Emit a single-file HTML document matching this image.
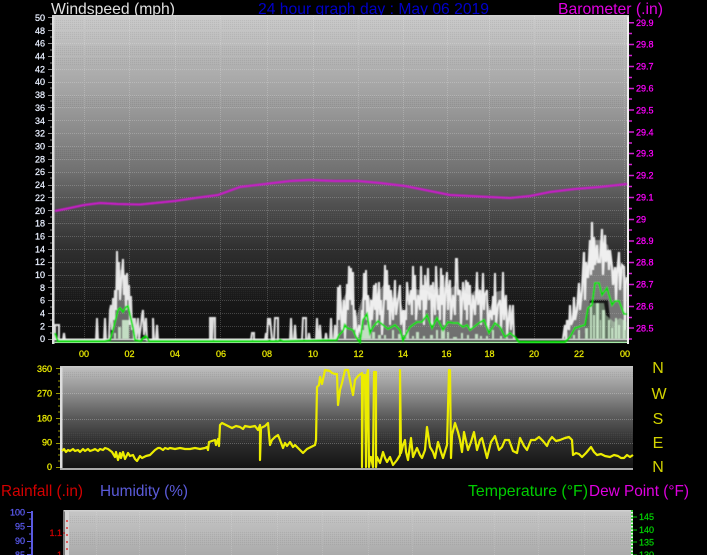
<!DOCTYPE html>
<html><head><meta charset="utf-8"><title>24 hour graph</title>
<style>
html,body{margin:0;padding:0;background:#000;width:707px;height:555px;overflow:hidden}
svg{display:block}
text{font-family:"Liberation Sans",sans-serif}
.t{font-size:16px;fill-opacity:.88}
.s{font-size:9px;stroke-width:.25}
</style></head><body>
<svg width="707" height="555" viewBox="0 0 707 555" xmlns="http://www.w3.org/2000/svg">
<defs>
<linearGradient id="g1" x1="0" y1="0" x2="0" y2="1">
<stop offset="0" stop-color="#cacaca"/><stop offset=".25" stop-color="#a0a0a0"/><stop offset=".47" stop-color="#727272"/><stop offset=".57" stop-color="#525252"/><stop offset=".72" stop-color="#2e2e2e"/><stop offset=".87" stop-color="#191919"/><stop offset="1" stop-color="#0e0e0e"/>
</linearGradient>
<linearGradient id="g2" x1="0" y1="0" x2="0" y2="1">
<stop offset="0" stop-color="#c0c0c0"/><stop offset=".25" stop-color="#909090"/><stop offset=".5" stop-color="#585858"/><stop offset=".75" stop-color="#2c2c2c"/><stop offset="1" stop-color="#111"/>
</linearGradient>
<linearGradient id="g3" x1="0" y1="0" x2="0" y2="1">
<stop offset="0" stop-color="#c6c6c6"/><stop offset="1" stop-color="#ababab"/>
</linearGradient>
<pattern id="d" width="2" height="2" patternUnits="userSpaceOnUse"><rect width="1" height="1" fill="#000" opacity=".06"/><rect x="1" y="1" width="1" height="1" fill="#fff" opacity=".04"/></pattern>
<filter id="b" x="0" y="0" width="707" height="555" filterUnits="userSpaceOnUse"><feGaussianBlur stdDeviation=".45"/></filter>
<filter id="b2" x="0" y="0" width="707" height="555" filterUnits="userSpaceOnUse"><feGaussianBlur stdDeviation=".3"/></filter>
</defs>

<!-- titles -->
<text class="t" x="51" y="14" fill="#fff" textLength="124" lengthAdjust="spacingAndGlyphs">Windspeed (mph)</text>
<text class="t" x="258" y="14" fill="#0000e6" textLength="231" lengthAdjust="spacingAndGlyphs">24 hour graph day : May 06 2019</text>
<text class="t" x="558" y="14" fill="#f0f" textLength="105" lengthAdjust="spacingAndGlyphs">Barometer (.in)</text>

<!-- main plot -->
<rect x="52" y="15" width="577" height="329" fill="url(#g1)"/>
<rect x="54" y="20" width="573" height="20" fill="url(#d)"/>
<rect x="54" y="45" width="573" height="20" fill="url(#d)"/>
<rect x="54" y="96" width="573" height="12" fill="url(#d)"/>
<rect x="54" y="148" width="573" height="12" fill="url(#d)"/>
<rect x="54" y="212" width="573" height="12" fill="url(#d)"/>
<rect x="54" y="275" width="573" height="25" fill="url(#d)"/>
<rect x="52" y="15" width="2.5" height="329" fill="#ddd"/>
<rect x="627" y="15" width="2" height="329" fill="#eee"/>
<rect x="52" y="15" width="577" height="1.5" fill="#d0d0d0"/>

<!-- grid -->
<g filter="url(#b2)">
<path stroke="#fff" stroke-opacity=".2" stroke-width="1" stroke-dasharray="1 1" fill="none" d="M54 326.5H627M54 313.5H627M54 300.5H627M54 287.5H627M54 275.5H627M54 262.5H627M54 249.5H627M54 236.5H627M54 223.5H627M54 210.5H627M54 197.5H627M54 185.5H627M54 172.5H627M54 159.5H627M54 146.5H627M54 133.5H627M54 120.5H627M54 107.5H627M54 95.5H627M54 82.5H627M54 69.5H627M54 56.5H627M54 43.5H627M54 30.5H627M84.5 16V340M129.5 16V340M175.5 16V340M220.5 16V340M267.5 16V340M313.5 16V340M358.5 16V340M403.5 16V340M447.5 16V340M489.5 16V340M534.5 16V340M579.5 16V340M624.5 16V340"/>
</g>

<!-- left ticks -->
<path stroke="#8a8a8a" stroke-width="1" fill="none" d="M48 339.5H52M48 326.5H52M48 313.5H52M48 300.5H52M48 287.5H52M48 275.5H52M48 262.5H52M48 249.5H52M48 236.5H52M48 223.5H52M48 210.5H52M48 197.5H52M48 185.5H52M48 172.5H52M48 159.5H52M48 146.5H52M48 133.5H52M48 120.5H52M48 107.5H52M48 95.5H52M48 82.5H52M48 69.5H52M48 56.5H52M48 43.5H52M48 30.5H52M48 17.5H52M50 333H52M50 320H52M50 307H52M50 294H52M50 281H52M50 268H52M50 256H52M50 243H52M50 230H52M50 217H52M50 204H52M50 191H52M50 178H52M50 166H52M50 153H52M50 140H52M50 127H52M50 114H52M50 101H52M50 88H52M50 76H52M50 63H52M50 50H52M50 37H52M50 24H52"/>
<g class="s" fill="#f4f8ff" stroke="#dfe8ff" text-anchor="end">
<text x="45" y="342">0</text><text x="45" y="329.5">2</text><text x="45" y="316.5">4</text><text x="45" y="303.5">6</text><text x="45" y="291">8</text>
<text x="45" y="278">10</text><text x="45" y="265">12</text><text x="45" y="252.5">14</text><text x="45" y="239.5">16</text><text x="45" y="226.5">18</text>
<text x="45" y="214">20</text><text x="45" y="201">22</text><text x="45" y="188">24</text><text x="45" y="175">26</text><text x="45" y="162.5">28</text>
<text x="45" y="149.5">30</text><text x="45" y="136.5">32</text><text x="45" y="124">34</text><text x="45" y="111">36</text><text x="45" y="98">38</text>
<text x="45" y="85">40</text><text x="45" y="72.5">42</text><text x="45" y="59.5">44</text><text x="45" y="46.5">46</text><text x="45" y="34">48</text><text x="45" y="21">50</text>
</g>

<!-- right ticks -->
<path stroke="#d020d0" stroke-width="1.5" fill="none" d="M629 22.7H634M629 44.5H634M629 66.5H634M629 88.5H634M629 110H634M629 132H634M629 153.5H634M629 175.5H634M629 197.5H634M629 219.5H634M629 241H634M629 262.5H634M629 284.5H634M629 306.5H634M629 328H634M629 33.5H632M629 55.5H632M629 77.5H632M629 99H632M629 121H632M629 143H632M629 164.5H632M629 186.5H632M629 208.5H632M629 230H632M629 252H632M629 273.5H632M629 295.5H632M629 317.5H632M629 339H632"/>
<g class="s" fill="#f0f" stroke="#f0f">
<text x="636" y="26">29.9</text><text x="636" y="47.5">29.8</text><text x="636" y="69.5">29.7</text><text x="636" y="91.5">29.6</text><text x="636" y="113.5">29.5</text><text x="636" y="135.5">29.4</text><text x="636" y="156.5">29.3</text><text x="636" y="178.5">29.2</text><text x="636" y="200.5">29.1</text><text x="636" y="222.5">29</text><text x="636" y="244">28.9</text><text x="636" y="265.5">28.8</text><text x="636" y="287.5">28.7</text><text x="636" y="309.5">28.6</text><text x="636" y="331.5">28.5</text>
</g>

<!-- x labels -->
<g class="s" fill="#e8e800" stroke="#e8e800" text-anchor="middle">
<text x="84" y="357">00</text><text x="129.5" y="357">02</text><text x="175" y="357">04</text><text x="221" y="357">06</text><text x="267" y="357">08</text><text x="313" y="357">10</text><text x="358.5" y="357">12</text><text x="403" y="357">14</text><text x="446.5" y="357">16</text><text x="489.5" y="357">18</text><text x="534" y="357">20</text><text x="579" y="357">22</text><text x="625" y="357">00</text>
</g>

<!-- baseline -->
<rect x="54" y="338.5" width="573" height="2" fill="#c0c0c0"/>
<rect x="54" y="341.5" width="573" height="1.5" fill="#a8e8a8"/>

<g filter="url(#b)">
<!-- barometer -->
<polyline fill="none" stroke="#c81ec8" stroke-width="2.2" points="55,211 70,208 84,205 100,203 118,204 140,204.5 155,203 175,201 195,198 218,195 240,187 265,184 290,181 310,180 335,181 358,181 380,183 405,186 425,190 450,195 470,196 490,197 510,198 530,196 550,192 575,189 600,187 627,184"/>

<!-- mass under gusts -->
<polygon fill="#bdbdbd" fill-opacity=".55" points="338,339 340,305 350,285 356,318 364,292 372,300 378,292 386,282 393,298 400,298 405,318 412,288 420,290 426,290 434,295 441,285 448,290 456,285 462,292 470,295 478,288 484,292 490,308 496,292 503,290 510,318 514,339"/>
<polygon fill="#bdbdbd" fill-opacity=".5" points="112,339 115,300 118,270 124,270 128,290 133,325 135,339"/>
<polygon fill="#c4c4c4" fill-opacity=".55" points="566,339 572,315 580,298 586,270 592,240 600,240 608,245 613,270 620,265 627,280 627,339 612,339 608,300 590,300 584,339"/>

<!-- white gusts -->
<g fill="none" stroke-linejoin="miter">
<polyline stroke="#f6f6f6" stroke-opacity=".9" stroke-width="2" points="55,340 55,325 59,325 59,340 63,340 64,333 65,340 96,340 97,318 98,340 104,340 105,318 106,340 109,340 110,310 111,305 112,330 113,298 114,320 115,290 116,310 117,251 118,290 119,262 120,300 121,285 122,270 123,259 124,295 125,275 126,310 127,273 128,300 129,285 130,325 131,296 132,330 133,318 134,340 135,318 136,340 138,318 139,340 141,325 142,315 143,310 144,335 146,318 147,340 153,340 153,318 154,340 156,340 157,325 158,340 210,340 210,318 212,318 212,340 213,318 215,318 215,340 251,340 252,333 254,333 254,340 265,340 266,333 267,340 268,318 270,325 270,318 272,340 274,340 275,318 278,318 278,340 290,340 291,318 292,340 294,340 295,325 296,340 302,340 303,318 306,318 306,340 308,340 309,333 310,340 316,340 317,318 318,340 319,340 320,325 321,340 325,340 326,333 327,340 330,340 331,318 332,340 334,340 335,325 336,340"/>
<polyline stroke="#f8f8f8" stroke-opacity=".92" stroke-width="2" points="337,339 338,287 339,320 340,285 342,330 344,300 345,339 347,284 348,310 349,266 350,300 351,268 352,305 353,272 354,330 355,310 357,339 359,325 361,335 362,310 363,320 364,273 365,300 366,270 367,320 368,295 370,330 371,300 372,320 374,285 375,310 376,283 377,325 379,282 380,315 381,300 382,335 384,300 385,265 386,300 387,270 388,310 389,285 390,325 391,290 393,320 395,280 396,315 398,300 400,285 401,325 403,310 404,335 405,310 406,320 407,282 409,305 411,290 412,315 413,266 414,300 415,275 416,320 418,295 420,310 421,266 422,300 423,285 424,325 425,275 426,310 428,268 429,300 431,285 432,325 433,282 435,315 436,266 438,310 439,295 440,320 441,268 442,305 443,275 444,325 446,282 447,272 448,310 449,290 450,280 451,320 453,295 455,315 456,259 457,259 458,295 460,290 461,325 463,282 465,310 466,280 467,320 468,282 469,305 470,285 471,330 473,295 475,315 477,272 478,305 480,290 481,325 482,300 483,273 484,310 485,295 487,290 488,330 490,310 492,320 493,296 494,315 495,273 496,325 498,305 500,300 501,330 502,310 503,272 504,320 506,295 507,335 509,315 510,305 511,330 513,305 514,339"/>
<polyline stroke="#f8f8f8" stroke-opacity=".92" stroke-width="2.2" points="563,339 565,325 566,339 567,320 569,330 570,305 571,325 573,320 574,297 575,320 577,310 579,283 580,310 582,290 584,252 585,300 586,262 587,273 588,278 590,240 591,275 592,222 593,270 594,237 595,265 597,245 598,262 600,262 602,229 603,275 605,235 606,262 608,250 609,270 610,250 612,267 613,285 615,267 616,300 617,275 619,252 620,290 622,265 624,267 625,330 626,285 627,277"/>
</g>

<!-- pale green columns -->
<polygon fill="#c8efc8" fill-opacity=".45" points="584,339 586,328 590,303 604,303 606,315 614,322 620,318 627,322 627,339"/>
<g fill="#d2f2d2" fill-opacity=".85">
<rect x="114" y="333" width="2" height="6"/><rect x="118" y="327" width="3" height="12"/><rect x="122" y="320" width="7" height="19"/>
<rect x="361" y="330" width="3" height="9"/><rect x="364" y="325" width="3" height="14"/><rect x="367" y="322" width="4" height="17"/><rect x="372" y="332" width="3" height="7"/><rect x="378" y="335" width="3" height="4"/><rect x="384" y="335" width="2" height="4"/><rect x="392" y="330" width="2" height="9"/><rect x="398" y="334" width="3" height="5"/><rect x="406" y="330" width="3" height="9"/><rect x="412" y="336" width="2" height="3"/><rect x="416" y="332" width="3" height="7"/><rect x="423" y="336" width="2" height="3"/><rect x="430" y="335" width="3" height="4"/><rect x="436" y="330" width="2" height="9"/><rect x="441" y="330" width="4" height="9"/><rect x="447" y="332" width="2" height="7"/><rect x="453" y="337" width="4" height="2"/><rect x="461" y="333" width="2" height="6"/><rect x="467" y="335" width="2" height="4"/><rect x="475" y="334" width="3" height="5"/><rect x="480" y="336" width="2" height="3"/><rect x="486" y="336" width="2" height="3"/><rect x="492" y="330" width="2" height="9"/><rect x="500" y="336" width="2" height="3"/><rect x="506" y="337" width="2" height="2"/>
<rect x="573" y="335" width="2" height="4"/><rect x="578" y="330" width="2" height="9"/><rect x="585" y="328" width="3" height="11"/><rect x="590" y="303" width="2" height="36"/><rect x="593" y="315" width="2" height="24"/><rect x="596" y="303" width="3" height="36"/><rect x="600" y="320" width="1" height="19"/><rect x="602" y="310" width="3" height="29"/><rect x="608" y="320" width="2" height="19"/><rect x="611" y="328" width="2" height="11"/><rect x="615" y="318" width="2" height="21"/><rect x="618" y="325" width="2" height="14"/><rect x="623" y="320" width="2" height="19"/><rect x="626" y="330" width="1" height="9"/>
</g>

<!-- green avg -->
<polyline fill="none" stroke="#00e000" stroke-width="2" points="55,333 57,339 58,341 105,341 110,340 113,330 115,322 118,310 120,308 123,312 126,307 128,306 130,315 133,328 135,340 141,341 143,338 146,336 149,341 278,341 280,340 283,341 336.7,340 339,335 343,331 345,325 347,328 350,329 353,330 356,337 359,341 360,342 363,320 367,314 370,333 373,327 378,321 383,325 388,329 395,325 400,330 403,340 410,327 417,322 422,322 427,315 432,328 437,318 443,330 448,322 453,323 458,323 463,327 467,325 470,330 479,323 484,320 489,333 495,323 500,327 505,337 510,333 515,337 519,342 565,342 570,337 575,328 585,325 588,308 592,305 595,283 599,283 602,295 607,288 612,305 615,301 619,301 624,314 627,314"/>
</g>

<!-- wind direction plot -->
<rect x="60" y="366" width="573" height="104" fill="url(#g2)"/>
<rect x="62" y="372" width="571" height="6" fill="url(#d)"/>
<rect x="62" y="432" width="571" height="10" fill="url(#d)"/>
<rect x="60" y="366" width="2.5" height="104" fill="#ddd"/>
<rect x="60" y="366" width="573" height="1.5" fill="#c8c8c8"/>
<rect x="60" y="468" width="573" height="2" fill="#aaa"/>
<path stroke="#fff" stroke-opacity=".25" stroke-dasharray="1 1" fill="none" d="M62 393.5H633M62 419.5H633M62 443.5H633"/>
<path stroke="#9a9a00" stroke-width="1" fill="none" d="M56 368.5H60M56 393.5H60M56 418.5H60M56 443.5H60M56 467.5H60M58 374H60M58 381H60M58 387H60M58 399H60M58 406H60M58 412H60M58 424H60M58 431H60M58 437H60M58 449H60M58 455H60M58 461H60"/>
<g class="s" fill="#f0f000" stroke="#f0f000" text-anchor="end">
<text x="52" y="372">360</text><text x="52" y="396.5">270</text><text x="52" y="421.5">180</text><text x="52" y="445.5">90</text><text x="52" y="470">0</text>
</g>
<polyline filter="url(#b2)" fill="none" stroke="#ecec00" stroke-width="2.2" stroke-linejoin="round" points="62,451 64,449 66,452 68,450 70,451 73,449 75,451 78,450 80,452 83,449 85,451 88,449 90,451 93,450 95,449 98,451 100,449 103,450 105,448 108,449 112,452 115,457 116,452 118,460 120,453 121,458 123,452 125,459 128,453 130,456 133,455 135,459 137,461 140,456 142,458 146,456 150,455 155,450 158,448 160,448 163,450 165,448 168,449 170,448 175,449 180,448 185,449 190,449 195,448 200,449 205,448 207,447 208,450 209,442 212,441 215,440 216,445 218,439 219,446 220,425 222,423 226,425 230,427 232,428 236,426 240,427 243,429 245,426 250,427 255,426 258,430 260,425 260,460 261,428 265,426 268,423 270,445 272,440 275,437 278,435 280,440 283,448 285,443 287,446 290,442 293,447 295,445 300,450 303,453 307,449 311,447 315,445 316,440 317,387 319,385 320,377 322,384 325,370 330,371 332,373 335,374 337,374 338,405 340,390 342,383 345,370 348,370 350,380 353,395 355,380 358,376 362,373 362,467 363,375 365,375 366,467 367,375 368,370 369,467 370,457 371,457 373,467 374,372 376,372 376,467 377,457 380,463 383,452 385,458 387,462 390,457 393,465 397,460 400,455 400,370 401,453 403,445 405,440 406,452 408,460 411,438 413,457 417,448 420,455 422,458 425,450 427,427 430,447 433,452 435,458 438,442 441,452 443,458 447,445 449,370 450,370 451,458 452,435 455,423 458,432 460,440 462,452 464,432 468,450 471,442 474,432 477,450 480,440 482,438 485,450 487,458 491,442 495,436 499,450 502,447 505,440 509,440 513,451 517,453 520,438 524,446 527,450 531,440 535,440 539,437 543,441 547,446 549,441 552,437 556,441 560,440 565,438 569,437 572,440 573,455 576,453 579,454 582,457 586,453 591,447 594,452 597,455 601,454 605,456 610,457 614,455 618,456 621,458 624,458 627,455 630,457 633,455"/>

<!-- compass -->
<g class="t" fill="#f0f000" text-anchor="middle">
<text x="658" y="373">N</text><text x="659" y="399">W</text><text x="658" y="424">S</text><text x="658" y="448">E</text><text x="658" y="472">N</text>
</g>

<!-- legend -->
<text class="t" x="1" y="496" fill="#f00000" textLength="82" lengthAdjust="spacingAndGlyphs">Rainfall (.in)</text>
<text class="t" x="100" y="496" fill="#6868f8" textLength="88" lengthAdjust="spacingAndGlyphs">Humidity (%)</text>
<text class="t" x="468" y="496" fill="#00e800" textLength="120" lengthAdjust="spacingAndGlyphs">Temperature (°F)</text>
<text class="t" x="589" y="496" fill="#f0f" textLength="100" lengthAdjust="spacingAndGlyphs">Dew Point (°F)</text>

<!-- third plot -->
<rect x="64" y="510" width="568" height="45" fill="url(#g3)"/>
<rect x="69" y="515" width="562" height="8" fill="url(#d)"/>
<rect x="69" y="531" width="562" height="14" fill="url(#d)"/>
<rect x="63" y="510" width="2" height="45" fill="#777"/>
<rect x="65" y="510" width="4" height="45" fill="#d4d4d4"/>
<rect x="64" y="510" width="568" height="1.5" fill="#d0d0d0"/>
<path stroke="#fff" stroke-opacity=".15" stroke-dasharray="1 1" fill="none" d="M96.5 512V555M139.5 512V555M185.5 512V555M231.5 512V555M277.5 512V555M322.5 512V555M368.5 512V555M412.5 512V555M494.5 512V555M538.5 512V555M584.5 512V555"/>
<path stroke="#e04040" stroke-width="1.6" stroke-dasharray="2 5" fill="none" d="M67 520V555"/>
<path stroke="#c00000" stroke-width="1" fill="none" d="M63 533H65"/>
<g class="s" fill="#d00000" stroke="#d00000" text-anchor="end"><text x="62" y="536">1.1</text><text x="62" y="558">1</text></g>
<rect x="31" y="511" width="2" height="44" fill="#5a5ae0"/>
<path stroke="#5a5ae0" fill="none" d="M27 512.5H31M27 526.5H31M27 541.5H31M27 554.5H31M29 519H31M29 534H31M29 548H31"/>
<g class="s" fill="#5a5af0" stroke="#5a5af0" text-anchor="end"><text x="25" y="515.5">100</text><text x="25" y="529.5">95</text><text x="25" y="544">90</text><text x="25" y="558">85</text></g>
<rect x="631" y="510" width="2" height="45" fill="#f0f0f0"/>
<path stroke="#00c000" stroke-width="1.5" fill="none" stroke-dasharray="2 1.5" d="M632 510V555"/>
<path stroke="#00c000" fill="none" d="M633 517H637M633 530H637M633 542H637M633 555H637"/>
<g class="s" fill="#00d000" stroke="#00d000"><text x="639" y="520">145</text><text x="639" y="533">140</text><text x="639" y="545.5">135</text><text x="639" y="558">130</text></g>
</svg>
</body></html>
